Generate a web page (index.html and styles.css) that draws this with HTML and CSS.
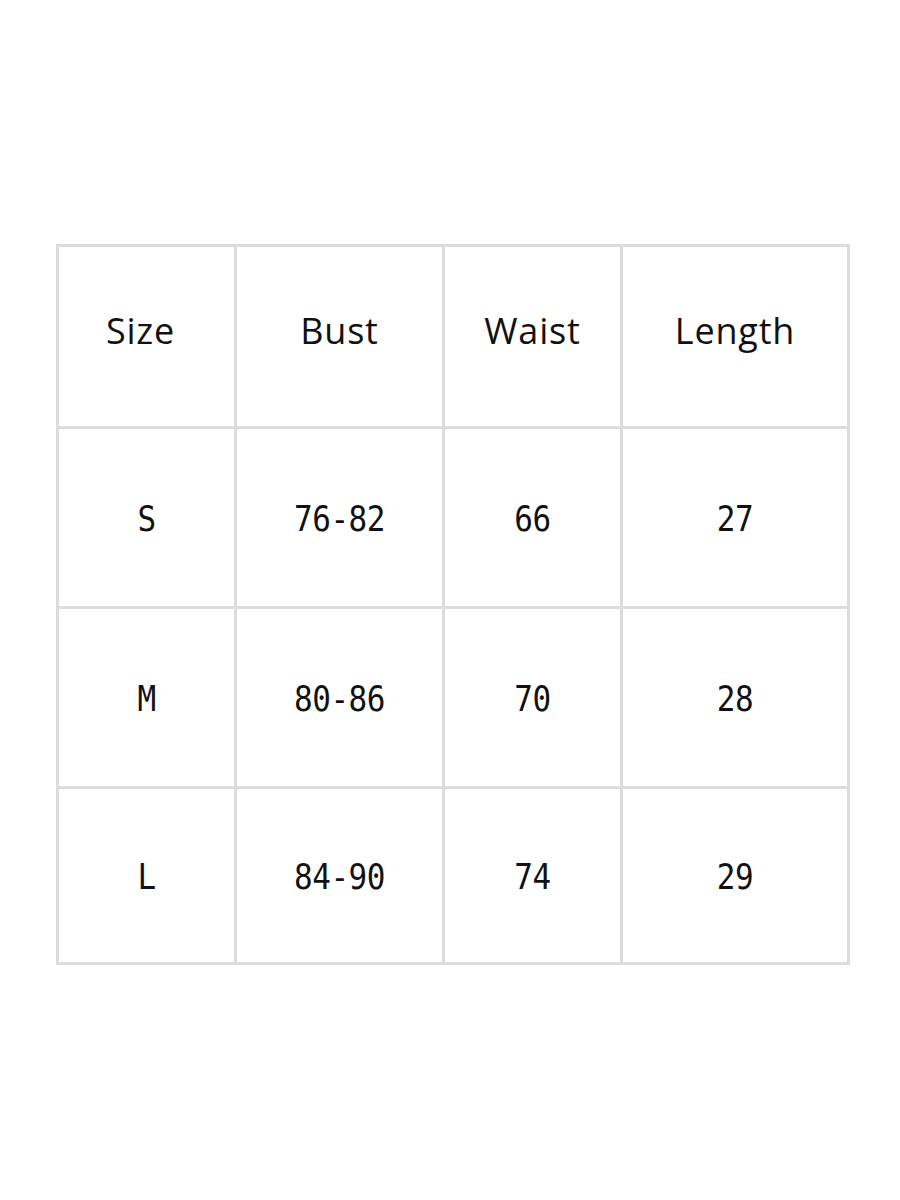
FILE: index.html
```html
<!DOCTYPE html>
<html>
<head>
<meta charset="utf-8">
<link rel="stylesheet" href="styles.css">
</head>
<body>
<div class="page">
  <table class="size-table">
    <colgroup>
      <col class="c1"><col class="c2"><col class="c3"><col class="c4">
    </colgroup>
    <thead>
      <tr class="head-row">
        <th class="first">Size</th><th>Bust</th><th>Waist</th><th>Length</th>
      </tr>
    </thead>
    <tbody>
      <tr class="r1"><td><span class="val">S</span></td><td><span class="val">76-82</span></td><td><span class="val">66</span></td><td><span class="val">27</span></td></tr>
      <tr class="r2"><td><span class="val">M</span></td><td><span class="val">80-86</span></td><td><span class="val">70</span></td><td><span class="val">28</span></td></tr>
      <tr class="r3"><td><span class="val">L</span></td><td><span class="val">84-90</span></td><td><span class="val">74</span></td><td><span class="val">29</span></td></tr>
    </tbody>
  </table>
</div>
</body>
</html>
```

FILE: styles.css
```css
html, body {
  margin: 0;
  padding: 0;
  background: #ffffff;
}
.page {
  width: 900px;
  height: 1200px;
  padding: 244px 0 0 56px;
  box-sizing: border-box;
}
.size-table {
  border-collapse: collapse;
  table-layout: fixed;
  width: 792px;
}
.c1 { width: 178px; }
.c2 { width: 208px; }
.c3 { width: 178px; }
.c4 { width: 227px; }
.size-table th,
.size-table td {
  border: 3px solid #dcdcdc;
  padding: 0;
  text-align: center;
  vertical-align: middle;
  color: #111111;
}
.size-table th {
  font-family: "Open Sans", "Noto Sans", sans-serif;
  font-weight: 400;
  font-size: 36px;
  letter-spacing: 0.8px;
  padding-bottom: 12px;
}
.size-table th.first {
  padding-right: 12px;
}
.size-table td {
  font-family: "DejaVu Sans Mono", "Liberation Mono", monospace;
  font-size: 31px;
  letter-spacing: -0.5px;
}
.val {
  display: inline-block;
  transform: scaleY(1.16);
}
.head-row { height: 182px; }
.r1 { height: 180px; }
.r2 { height: 180px; }
.r3 { height: 176px; }
```
